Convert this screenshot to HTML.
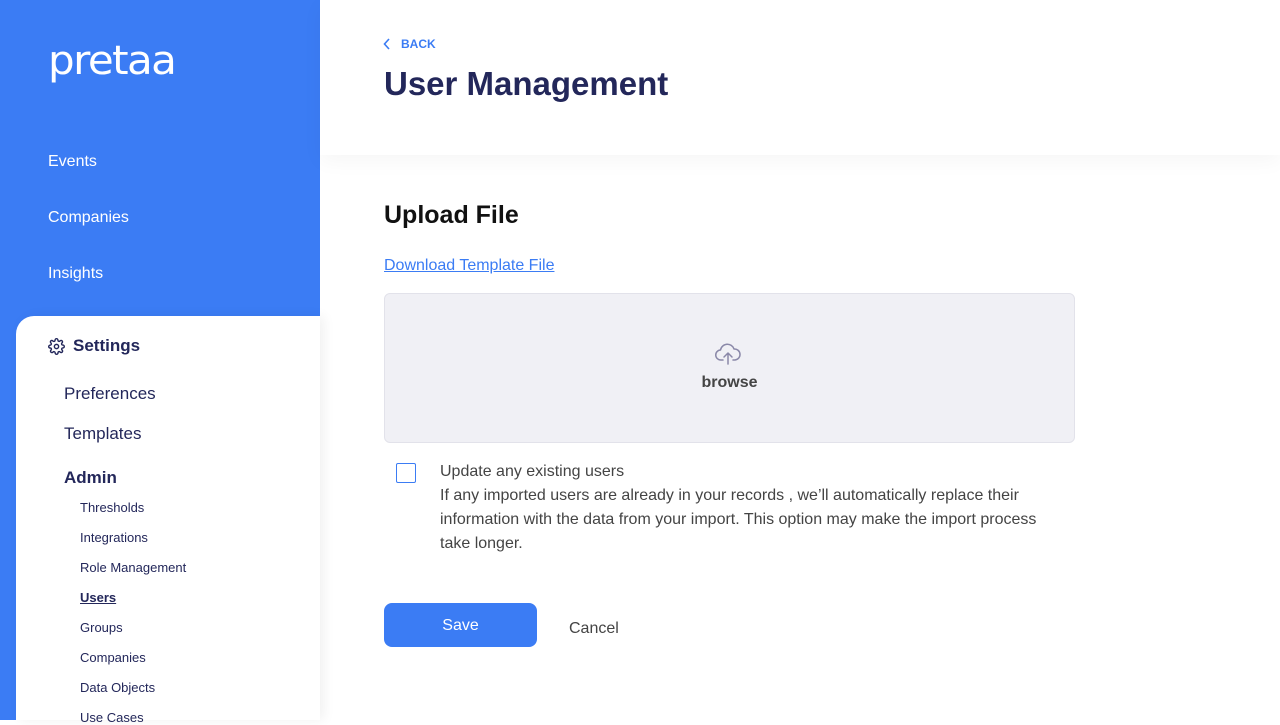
<!DOCTYPE html>
<html><head><style>
*{margin:0;padding:0;box-sizing:border-box}
body{width:1280px;height:720px;overflow:hidden;font-family:"Liberation Sans",Arial,sans-serif;background:#fff;position:relative}
.side{position:absolute;left:0;top:0;width:320px;height:720px;background:#3b7cf4}
.nav{position:absolute;left:48px;color:#fff;font-size:16px}
.panel{position:absolute;left:16px;top:316px;width:304px;height:404px;background:#fff;border-top-left-radius:18px;box-shadow:4px 0 12px rgba(0,0,0,0.06)}
.p{position:absolute;color:#23275a}
.main{position:absolute;left:320px;top:0;width:960px;height:720px}
.hdr{position:absolute;left:0;top:0;width:960px;height:155px;background:#fff;box-shadow:0 6px 20px rgba(0,0,0,0.04)}
</style></head><body>
<div class="side">
<div style="position:absolute;left:48px;top:38px;color:#fff;font-family:'DejaVu Sans',sans-serif;font-size:40px;letter-spacing:-1.5px;transform:scaleX(1.05);transform-origin:left">pretaa</div>
<div class="nav" style="top:153px">Events</div>
<div class="nav" style="top:209px">Companies</div>
<div class="nav" style="top:265px">Insights</div>
</div>
<div class="panel">
<svg style="position:absolute;left:32px;top:22px" width="17" height="17" viewBox="0 0 24 24" fill="none" stroke="#23275a" stroke-width="2"><circle cx="12" cy="12" r="3"/><path d="M19.4 15a1.7 1.7 0 0 0 .3 1.8l.1.1a2 2 0 1 1-2.8 2.8l-.1-.1a1.7 1.7 0 0 0-1.8-.3 1.7 1.7 0 0 0-1 1.5V21a2 2 0 1 1-4 0v-.1a1.7 1.7 0 0 0-1.1-1.5 1.7 1.7 0 0 0-1.8.3l-.1.1a2 2 0 1 1-2.8-2.8l.1-.1a1.7 1.7 0 0 0 .3-1.8 1.7 1.7 0 0 0-1.500-1H3a2 2 0 1 1 0-4h.1a1.7 1.7 0 0 0 1.5-1.1 1.7 1.7 0 0 0-.3-1.8l-.1-.1a2 2 0 1 1 2.8-2.8l.1.1a1.7 1.7 0 0 0 1.8.3H9a1.7 1.7 0 0 0 1-1.5V3a2 2 0 1 1 4 0v.1a1.7 1.7 0 0 0 1 1.5 1.7 1.7 0 0 0 1.8-.3l.1-.1a2 2 0 1 1 2.8 2.8l-.1.1a1.7 1.7 0 0 0-.3 1.8V9a1.7 1.7 0 0 0 1.5 1H21a2 2 0 1 1 0 4h-.1a1.7 1.7 0 0 0-1.5 1z"/></svg>
<div class="p" style="left:57px;top:20px;font-size:17px;font-weight:700">Settings</div>
<div class="p" style="left:48px;top:68px;font-size:17px">Preferences</div>
<div class="p" style="left:48px;top:108px;font-size:17px">Templates</div>
<div class="p" style="left:48px;top:152px;font-size:17px;font-weight:700">Admin</div>
<div class="p" style="left:64px;top:184px;font-size:13px">Thresholds</div>
<div class="p" style="left:64px;top:214px;font-size:13px">Integrations</div>
<div class="p" style="left:64px;top:244px;font-size:13px">Role Management</div>
<div class="p" style="left:64px;top:274px;font-size:13px;font-weight:700;text-decoration:underline">Users</div>
<div class="p" style="left:64px;top:304px;font-size:13px">Groups</div>
<div class="p" style="left:64px;top:334px;font-size:13px">Companies</div>
<div class="p" style="left:64px;top:364px;font-size:13px">Data Objects</div>
<div class="p" style="left:64px;top:394px;font-size:13px">Use Cases</div>
</div>
<div class="main">
<div class="hdr">
<svg style="position:absolute;left:63px;top:38px" width="8" height="12" viewBox="0 0 8 12" fill="none" stroke="#3b7cf4" stroke-width="1.6"><path d="M6 1L1.5 6L6 11"/></svg>
<div style="position:absolute;left:81px;top:37px;color:#3b7cf4;font-size:12px;font-weight:700">BACK</div>
<div style="position:absolute;left:64px;top:65px;color:#23275a;font-size:33px;font-weight:700;letter-spacing:0px">User Management</div>
</div>
<div style="position:absolute;left:64px;top:201px;font-size:25px;font-weight:700;color:#111">Upload File</div>
<div style="position:absolute;left:64px;top:257px;font-size:16px;color:#3b7cf4;text-decoration:underline">Download Template File</div>
<div style="position:absolute;left:64px;top:293px;width:691px;height:150px;background:#f0f0f5;border:1px solid #e2e2ea;border-radius:6px">
<svg style="position:absolute;left:329px;top:48px" width="28" height="24" viewBox="0 0 28 24" fill="none" stroke="#8a88a8" stroke-width="1.5" stroke-linecap="round" stroke-linejoin="round"><path d="M9 18H7a5 5 0 0 1-.5-10A7 7 0 0 1 20 7a4.5 4.5 0 0 1 1 11h-2"/><path d="M14 22V11M10 15l4-4 4 4"/></svg>
<div style="position:absolute;left:0;width:689px;top:80px;text-align:center;font-size:16px;font-weight:700;color:#444">browse</div>
</div>
<div style="position:absolute;left:76px;top:463px;width:20px;height:20px;border:1.5px solid #3b7cf4;border-radius:2px"></div>
<div style="position:absolute;left:120px;top:460px;width:625px;font-size:16px;line-height:24px;color:#444">Update any existing users<br>If any imported users are already in your records , we’ll automatically replace their information with the data from your import. This option may make the import process take longer.</div>
<div style="position:absolute;left:64px;top:603px;width:153px;height:44px;background:#3b7cf4;border-radius:8px;color:#fff;font-size:16px;text-align:center;line-height:46px">Save</div>
<div style="position:absolute;left:249px;top:620px;font-size:16px;color:#444">Cancel</div>
</div>
</body></html>
